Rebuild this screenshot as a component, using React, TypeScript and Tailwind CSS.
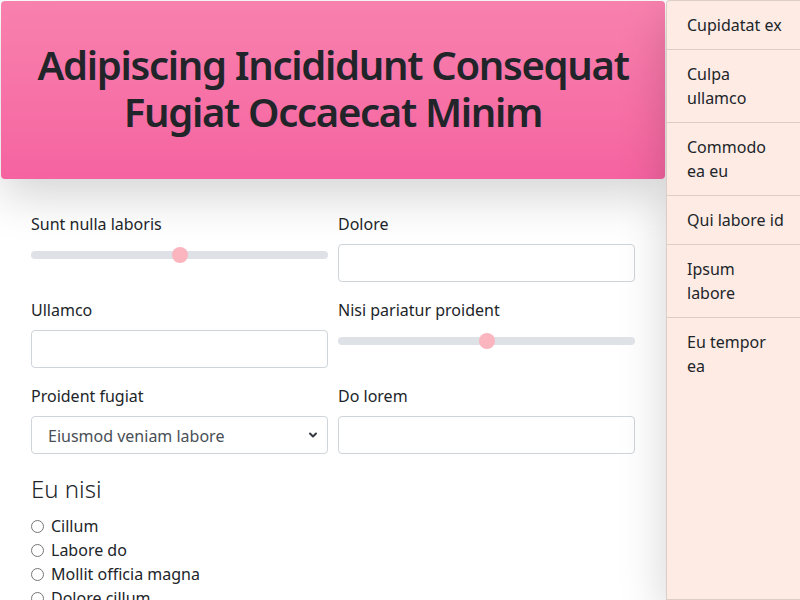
import { ChevronDown } from "lucide-react"

const font = { fontFamily: '"Noto Sans", "Segoe UI", sans-serif' }

const sideItems: string[][] = [
    ['Cupidatat ex'],
    ['Culpa', 'ullamco'],
    ['Commodo', 'ea eu'],
    ['Qui labore id'],
    ['Ipsum', 'labore'],
    ['Eu tempor', 'ea'],
]

const radios = ['Cillum', 'Labore do', 'Mollit officia magna', 'Dolore cillum']

const Slider = () => (
    <div className="h-[22px] flex items-center">
        <div className="relative w-full h-2 rounded-full bg-[#dee2e6]">
            <div className="absolute left-1/2 top-1/2 -translate-x-1/2 -translate-y-1/2 w-4 h-4 rounded-full bg-[#fbb5bf]" />
        </div>
    </div>
)

const TextBox = () => (
    <div className="h-[38px] w-full rounded border border-[#ced4da] bg-white" />
)

const Field = ({ label, children }: { label: string; children: React.ReactNode }) => (
    <div className="mb-4">
        <div className="mb-2 text-base leading-6 text-[#212529]">{label}</div>
        {children}
    </div>
)

export default function App() {
    return (
        <div className="flex w-[800px] h-[600px] overflow-hidden bg-white" style={font}>
            <div className="w-[666px] shrink-0 p-px">
                <div className="h-[178px] rounded flex items-center justify-center bg-gradient-to-b from-[#f881ae] to-[#f563a0] shadow-[0_1rem_3rem_rgba(0,0,0,0.175)]">
                    <h1 className="-mt-[4px] flex flex-col items-center text-[40px] leading-[47px] font-semibold tracking-[-1.3px] text-[#212529]">
                        <span>Adipiscing Incididunt Consequat</span>
                        <span>Fugiat Occaecat Minim</span>
                    </h1>
                </div>
                <div className="px-[30px] pt-[33px]">
                    <div className="grid grid-cols-2 gap-x-[10px]">
                        <Field label="Sunt nulla laboris"><Slider /></Field>
                        <Field label="Dolore"><TextBox /></Field>
                        <Field label="Ullamco"><TextBox /></Field>
                        <Field label="Nisi pariatur proident"><Slider /></Field>
                        <Field label="Proident fugiat">
                            <div className="h-[38px] w-full rounded border border-[#ced4da] bg-white flex items-center justify-between pl-4 pr-2 text-base text-[#495057]">
                                <span className="pt-px">Eiusmod veniam labore</span>
                                <ChevronDown size={12} strokeWidth={4} className="text-[#343a40]" />
                            </div>
                        </Field>
                        <Field label="Do lorem"><TextBox /></Field>
                    </div>
                    <div className="mt-1 text-2xl leading-[29px] font-light text-[#212529] mb-[11px]">Eu nisi</div>
                    <div className="flex flex-col">
                        {radios.map(r => (
                            <label key={r} className="flex items-center h-6 text-base text-[#212529]">
                                <span className="w-[13px] h-[13px] rounded-full border border-[#767676] bg-white mr-[7px]" />
                                {r}
                            </label>
                        ))}
                    </div>
                </div>
            </div>
            <div className="flex-1 bg-[#fdebe4] border border-black/[.125] rounded-t shadow-[0_1rem_3rem_rgba(0,0,0,0.175)]">
                {sideItems.map((lines, i) => (
                    <div
                        key={i}
                        className={`px-5 py-3 text-base leading-6 text-[#212529] whitespace-nowrap ${i < sideItems.length - 1 ? 'border-b border-black/[.125]' : ''}`}
                    >
                        {lines.map((l, j) => <div key={j}>{l}</div>)}
                    </div>
                ))}
            </div>
        </div>
    )
}
